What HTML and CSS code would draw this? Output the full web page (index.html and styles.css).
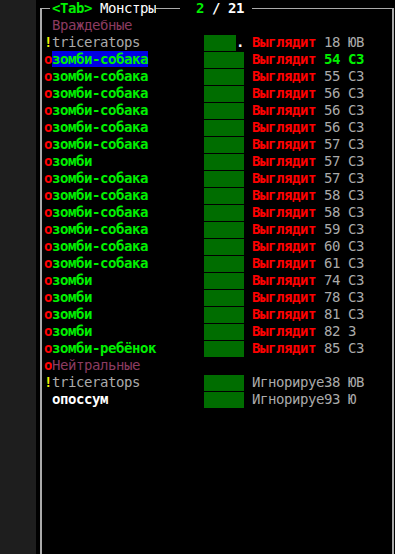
FILE: index.html
```html
<!DOCTYPE html>
<html lang="ru">
<head>
    <meta charset="UTF-8">
    <meta name="viewport" content="width=device-width, initial-scale=1.0">
    <title>Монстры</title>
    <link rel="stylesheet" href="styles.css">
</head>
<body>

    <div class="screen">

        <!-- Title line of the box -->
        <div class="head">
            <span class="corner-l"></span>
            <span class="title"><b class="hot">&lt;Tab&gt;</b> Монстры</span>
            <span class="line short"></span>
            <span class="count"><b class="hot">2</b><b> / 21</b></span>
            <span class="line corner-r"></span>
        </div>

        <div class="frame">
            <div class="row"><span class="mk"></span><span class="nm group">Враждебные</span></div>

            <div class="row">
                <span class="mk warn">!</span><span class="nm plain">triceratops</span>
                <span class="bar"><i class="fill" style="width: 32px"></i><b class="dot">.</b></span>
                <span class="att hostile">Выглядит</span><span class="num">18</span><span class="dir">ЮВ</span>
            </div>
            <div class="row">
                <span class="mk foe">о</span><span class="nm zed"><span class="sel">зомби-собака</span></span>
                <span class="bar"><i class="fill"></i></span>
                <span class="att hostile">Выглядит</span><span class="num near">54</span><span class="dir near">СЗ</span>
            </div>
            <div class="row"><span class="mk foe">о</span><span class="nm zed">зомби-собака</span><span class="bar"><i class="fill"></i></span><span class="att hostile">Выглядит</span><span class="num">55</span><span class="dir">СЗ</span></div>
            <div class="row"><span class="mk foe">о</span><span class="nm zed">зомби-собака</span><span class="bar"><i class="fill"></i></span><span class="att hostile">Выглядит</span><span class="num">56</span><span class="dir">СЗ</span></div>
            <div class="row"><span class="mk foe">о</span><span class="nm zed">зомби-собака</span><span class="bar"><i class="fill"></i></span><span class="att hostile">Выглядит</span><span class="num">56</span><span class="dir">СЗ</span></div>
            <div class="row"><span class="mk foe">о</span><span class="nm zed">зомби-собака</span><span class="bar"><i class="fill"></i></span><span class="att hostile">Выглядит</span><span class="num">56</span><span class="dir">СЗ</span></div>
            <div class="row"><span class="mk foe">о</span><span class="nm zed">зомби-собака</span><span class="bar"><i class="fill"></i></span><span class="att hostile">Выглядит</span><span class="num">57</span><span class="dir">СЗ</span></div>
            <div class="row"><span class="mk foe">о</span><span class="nm zed">зомби</span><span class="bar"><i class="fill"></i></span><span class="att hostile">Выглядит</span><span class="num">57</span><span class="dir">СЗ</span></div>
            <div class="row"><span class="mk foe">о</span><span class="nm zed">зомби-собака</span><span class="bar"><i class="fill"></i></span><span class="att hostile">Выглядит</span><span class="num">57</span><span class="dir">СЗ</span></div>
            <div class="row"><span class="mk foe">о</span><span class="nm zed">зомби-собака</span><span class="bar"><i class="fill"></i></span><span class="att hostile">Выглядит</span><span class="num">58</span><span class="dir">СЗ</span></div>
            <div class="row"><span class="mk foe">о</span><span class="nm zed">зомби-собака</span><span class="bar"><i class="fill"></i></span><span class="att hostile">Выглядит</span><span class="num">58</span><span class="dir">СЗ</span></div>
            <div class="row"><span class="mk foe">о</span><span class="nm zed">зомби-собака</span><span class="bar"><i class="fill"></i></span><span class="att hostile">Выглядит</span><span class="num">59</span><span class="dir">СЗ</span></div>
            <div class="row"><span class="mk foe">о</span><span class="nm zed">зомби-собака</span><span class="bar"><i class="fill"></i></span><span class="att hostile">Выглядит</span><span class="num">60</span><span class="dir">СЗ</span></div>
            <div class="row"><span class="mk foe">о</span><span class="nm zed">зомби-собака</span><span class="bar"><i class="fill"></i></span><span class="att hostile">Выглядит</span><span class="num">61</span><span class="dir">СЗ</span></div>
            <div class="row"><span class="mk foe">о</span><span class="nm zed">зомби</span><span class="bar"><i class="fill"></i></span><span class="att hostile">Выглядит</span><span class="num">74</span><span class="dir">СЗ</span></div>
            <div class="row"><span class="mk foe">о</span><span class="nm zed">зомби</span><span class="bar"><i class="fill"></i></span><span class="att hostile">Выглядит</span><span class="num">78</span><span class="dir">СЗ</span></div>
            <div class="row"><span class="mk foe">о</span><span class="nm zed">зомби</span><span class="bar"><i class="fill"></i></span><span class="att hostile">Выглядит</span><span class="num">81</span><span class="dir">СЗ</span></div>
            <div class="row"><span class="mk foe">о</span><span class="nm zed">зомби</span><span class="bar"><i class="fill"></i></span><span class="att hostile">Выглядит</span><span class="num">82</span><span class="dir">З</span></div>
            <div class="row"><span class="mk foe">о</span><span class="nm zed">зомби-ребёнок</span><span class="bar"><i class="fill"></i></span><span class="att hostile">Выглядит</span><span class="num">85</span><span class="dir">СЗ</span></div>

            <div class="row"><span class="mk foe">о</span><span class="nm group">Нейтральные</span></div>

            <div class="row"><span class="mk warn">!</span><span class="nm plain">triceratops</span><span class="bar"><i class="fill"></i></span><span class="att calm">Игнорируе</span><span class="num">38</span><span class="dir">ЮВ</span></div>
            <div class="row"><span class="mk"></span><span class="nm pet">опоссум</span><span class="bar"><i class="fill"></i></span><span class="att calm">Игнорируе</span><span class="num">93</span><span class="dir">Ю</span></div>
        </div>

    </div>

</body>
</html>
```

FILE: styles.css
```css
body { margin: 0; background: #1e1e1e; font-family: "DejaVu Sans Mono", "Liberation Mono", monospace; font-size: 14px; letter-spacing: -0.43px; line-height: 17px; color: #aaaaaa; }
b { font-weight: bold; }

.screen { margin-left: 36px; width: 360px; min-height: 100vh; background: #000; display: flex; flex-direction: column; }

/* box title */
.head { display: flex; height: 17px; white-space: pre; }
.corner-l { margin-left: 4px; width: 8px; height: 8px; align-self: flex-end; border-left: 2px solid #aaaaaa; border-top: 1px solid #aaaaaa; }
.title { margin-left: 2px; width: 104px; color: #fff; overflow: hidden; }
.line { height: 8px; align-self: flex-end; border-top: 1px solid #aaaaaa; }
.line.short { width: 24px; }
.count { margin-left: 16px; width: 48px; color: #fff; }
.corner-r { flex: 1; margin-left: 8px; margin-right: 2px; border-right: 2px solid #aaaaaa; }
.hot { color: #00f000; font-weight: bold; }

/* box body */
.frame { flex: 1; margin: 0 2px 0 4px; padding-left: 2px; border-left: 2px solid #aaaaaa; border-right: 2px solid #aaaaaa; }
.row { display: flex; height: 17px; white-space: pre; }
.mk { width: 8px; flex: none; overflow: hidden; }
.nm { width: 152px; flex: none; overflow: hidden; }
.bar { width: 40px; flex: none; display: flex; }
.fill { display: block; width: 40px; height: 16px; margin-top: 1px; background: #006d00; }
.dot { color: #fff; width: 8px; }
.att { width: 72px; flex: none; margin-left: 8px; overflow: hidden; }
.num { width: 24px; flex: none; }
.dir { flex: 1; }

.warn { color: #f0f000; font-weight: bold; }
.foe { color: #ff0000; font-weight: bold; }
.group { color: #8c3b60; }
.plain { color: #aaaaaa; }
.zed { color: #00f000; font-weight: bold; }
.pet { color: #fff; font-weight: bold; }
.sel { background: #0000e6; }
.hostile { color: #ff0000; font-weight: bold; }
.calm { color: #aaaaaa; }
.near { color: #00f000; font-weight: bold; }
```
